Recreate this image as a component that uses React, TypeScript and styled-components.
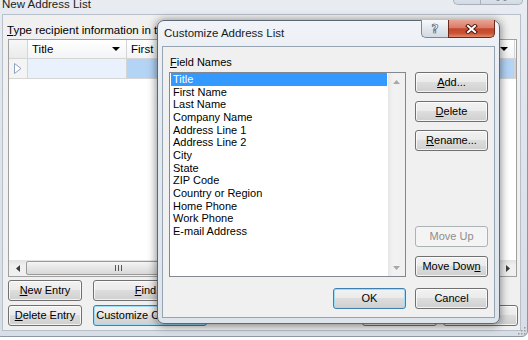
import styled, { createGlobalStyle } from "styled-components";

const font = `"Liberation Sans", Arial, sans-serif`;

const GlobalStyle = createGlobalStyle`
  html, body {
    margin: 0;
    padding: 0;
    background: #ffffff;
  }
  body {
    font-family: ${font};
    font-size: 11px;
    color: #000;
  }
`;

const Desktop = styled.div`
  position: relative;
  width: 528px;
  height: 340px;
  overflow: hidden;
  background: #ffffff;
`;

/* ---------- shared bits ---------- */

const Button = styled.button<{ $width: number; $default?: boolean }>`
  width: ${({ $width }) => $width}px;
  height: 21px;
  flex: none;
  box-sizing: border-box;
  padding: 0;
  border: 1px solid ${({ $default }) => ($default ? "#3c7fb1" : "#707070")};
  border-radius: 3px;
  background: linear-gradient(
    to bottom,
    #f2f2f2 0%,
    #ebebeb 45%,
    #dddddd 50%,
    #cfcfcf 100%
  );
  box-shadow: inset 0 0 0 1px
    ${({ $default }) => ($default ? "#9fdcf7" : "rgba(255,255,255,0.75)")};
  font-family: ${font};
  font-size: 11px;
  line-height: 19px;
  color: #000;
  text-align: center;
  white-space: nowrap;
  overflow: hidden;

  &:disabled {
    border-color: #adb2b5;
    background: #f4f4f4;
    box-shadow: none;
    color: #8d8d8d;
  }
`;

const CaptionGroup = styled.div`
  margin-left: auto;
  display: flex;
  align-self: flex-start;
`;

const HelpButton = styled.div<{ $width: number; $faded?: boolean }>`
  width: ${({ $width }) => $width}px;
  height: 18px;
  box-sizing: border-box;
  border: 1px solid ${({ $faded }) => ($faded ? "#a9b2bc" : "#7d8894")};
  border-top: none;
  border-right: none;
  border-radius: 0 0 0 5px;
  background: linear-gradient(to bottom, #f7f9fb, #e3e8ee 50%, #d3dae2);
  display: flex;
  align-items: center;
  justify-content: center;
  font-family: "DejaVu Sans", sans-serif;
  font-weight: bold;
  font-size: 12px;
  color: #ffffff;
  -webkit-text-stroke: 0.7px #505a66;
`;

const CloseButton = styled.div<{ $width: number; $faded?: boolean }>`
  width: ${({ $width }) => $width}px;
  height: 18px;
  box-sizing: border-box;
  border: 1px solid ${({ $faded }) => ($faded ? "#a9b2bc" : "#6c2a1e")};
  border-top: none;
  border-radius: 0 0 5px 0;
  background: ${({ $faded }) =>
    $faded
      ? "linear-gradient(to bottom, #f7f9fb, #e3e8ee 50%, #d3dae2)"
      : "linear-gradient(to bottom, #e8a493 0%, #dc7c66 45%, #c2462d 52%, #cc5234 78%, #e08a6c 100%)"};
  display: flex;
  align-items: center;
  justify-content: center;
`;

const CloseGlyph = ({ faded }: { faded?: boolean }) => (
  <svg width="13" height="10" viewBox="0 0 13 10">
    <path
      d="M3 2 L10 8 M10 2 L3 8"
      stroke={faded ? "#7d8792" : "#4a1a10"}
      strokeWidth="4"
      strokeLinecap="square"
    />
    <path
      d="M3 2 L10 8 M10 2 L3 8"
      stroke="#ffffff"
      strokeWidth="2"
      strokeLinecap="square"
    />
  </svg>
);

/* ---------- background window: New Address List ---------- */

const BackWindow = styled.div`
  position: absolute;
  left: -5px;
  top: -14px;
  width: 533px;
  height: 351px;
  box-sizing: border-box;
  border: 1px solid #8d97a3;
  border-radius: 6px;
  background: linear-gradient(to bottom, #e9edf2, #dfe5ec 40%, #d8dee5);
  display: flex;
  flex-direction: column;
`;

const BackTitleBar = styled.div`
  height: 28px;
  flex: none;
  display: flex;
  padding: 0 4px 0 6px;
`;

const BackTitle = styled.div`
  margin-top: 9px;
  line-height: 16px;
  font-size: 11.5px;
  color: #222;
`;

const BackClient = styled.div`
  flex: 1;
  margin: 0 7px 6px 7px;
  background: #f0f0f0;
  box-shadow: 0 0 0 1px #b7c0ca;
  padding: 7px 2px 4px 5px;
  display: flex;
  flex-direction: column;
`;

const Instruction = styled.div`
  width: 150px;
  line-height: 16px;
  font-size: 11.5px;
  margin-left: -1px;
  white-space: nowrap;
  overflow: hidden;
`;

const Grid = styled.div`
  width: 509px;
  height: 238px;
  margin-top: 1px;
  box-sizing: border-box;
  border: 1px solid #a0a0a0;
  background: #ffffff;
  display: flex;
  flex-direction: column;
  overflow: hidden;
`;

const GridRow = styled.div<{ $height: number }>`
  display: flex;
  flex: none;
  height: ${({ $height }) => $height}px;
`;

const HeaderCell = styled.div<{ $width: number }>`
  width: ${({ $width }) => $width}px;
  flex: none;
  box-sizing: border-box;
  border-right: 1px solid #d5d5d5;
  border-bottom: 1px solid #d5d5d5;
  background: linear-gradient(to bottom, #ffffff, #f3f4f6);
  display: flex;
  align-items: center;
  justify-content: space-between;
  padding: 0 6px 0 4px;
  font-size: 11.5px;
  white-space: nowrap;
  overflow: hidden;
`;

const CornerCell = styled(HeaderCell)`
  background: linear-gradient(to bottom, #f7f7f7, #ebebeb);
`;

const DataCell = styled.div<{ $width: number; $tone: "head" | "light" | "strong" }>`
  width: ${({ $width }) => $width}px;
  flex: none;
  box-sizing: border-box;
  border-right: 1px solid #d5d5d5;
  border-bottom: 1px solid #d5d5d5;
  background: ${({ $tone }) =>
    $tone === "head" ? "#f4f4f4" : $tone === "light" ? "#e8f1fc" : "#b4d4f6"};
  display: flex;
  align-items: center;
  justify-content: center;
`;

const GridBody = styled.div`
  flex: 1;
  background: #ffffff;
`;

const HScroll = styled.div`
  height: 16px;
  flex: none;
  display: flex;
  background: linear-gradient(to bottom, #e2e2e2, #f0f0f0 35%, #f0f0f0);
`;

const ScrollArrow = styled.div`
  width: 17px;
  flex: none;
  display: flex;
  align-items: center;
  justify-content: center;
`;

const HThumb = styled.div`
  width: 184px;
  margin: 1px 0;
  box-sizing: border-box;
  border: 1px solid #9a9a9a;
  border-radius: 2px;
  background: linear-gradient(to bottom, #f5f5f5, #e6e6e6 50%, #d8d8d8);
  display: flex;
  align-items: center;
  justify-content: center;
`;

const ScrollSpacer = styled.div`
  flex: 1;
`;

const ButtonRow = styled.div<{ $top: number }>`
  display: flex;
  gap: 11px;
  margin-top: ${({ $top }) => $top}px;
`;

const RightButtons = styled.div`
  margin-left: auto;
  display: flex;
  gap: 6px;
`;

const SizeGrip = styled.svg`
  position: absolute;
  right: 1px;
  bottom: 1px;
`;

const DropArrow = () => (
  <svg width="8" height="4" viewBox="0 0 8 4">
    <polygon points="0,0 8,0 4,4" fill="#000" />
  </svg>
);

const RowPointer = () => (
  <svg width="8" height="11" viewBox="0 0 8 11">
    <polygon
      points="0.5,0.5 7,5.5 0.5,10.5"
      fill="#ffffff"
      stroke="#8ca3bf"
      strokeWidth="1"
    />
  </svg>
);

const SmallArrow = ({ dir }: { dir: "left" | "right" | "up" | "down" }) => {
  const pts = {
    left: "4,0 4,7 0,3.5",
    right: "0,0 0,7 4,3.5",
    up: "0,4 7,4 3.5,0",
    down: "0,0 7,0 3.5,4",
  }[dir];
  const horiz = dir === "left" || dir === "right";
  return (
    <svg
      width={horiz ? 4 : 7}
      height={horiz ? 7 : 4}
      viewBox={horiz ? "0 0 4 7" : "0 0 7 4"}
    >
      <polygon points={pts} fill={horiz ? "#3c3c3c" : "#a8a8a8"} />
    </svg>
  );
};

const columns = [
  { label: "Title", width: 99 },
  { label: "First Name", width: 97 },
  { label: "Last Name", width: 97 },
  { label: "Company Name", width: 97 },
  { label: "Address Line 1", width: 97 },
  { label: "", width: 40 },
];

const NewAddressList = () => (
  <BackWindow>
    <BackTitleBar>
      <BackTitle>New Address List</BackTitle>
      <CaptionGroup>
        <HelpButton $width={27} $faded />
        <CloseButton $width={43} $faded>
          <CloseGlyph faded />
        </CloseButton>
      </CaptionGroup>
    </BackTitleBar>
    <BackClient>
      <Instruction>
        <u>T</u>ype recipient information in the table
      </Instruction>
      <Grid>
        <GridRow $height={19}>
          <CornerCell $width={19} />
          {columns.map((c, i) => (
            <HeaderCell key={i} $width={c.width}>
              <span>{c.label}</span>
              {c.label && <DropArrow />}
            </HeaderCell>
          ))}
        </GridRow>
        <GridRow $height={20}>
          <DataCell $width={19} $tone="head">
            <RowPointer />
          </DataCell>
          {columns.map((c, i) => (
            <DataCell key={i} $width={c.width} $tone={i === 0 ? "light" : "strong"} />
          ))}
        </GridRow>
        <GridBody />
        <HScroll>
          <ScrollArrow>
            <SmallArrow dir="left" />
          </ScrollArrow>
          <HThumb>
            <svg width="7" height="6" viewBox="0 0 7 6">
              <path d="M0.5 0 V6 M3.5 0 V6 M6.5 0 V6" stroke="#555" strokeWidth="1" />
            </svg>
          </HThumb>
          <ScrollSpacer />
          <ScrollArrow>
            <SmallArrow dir="right" />
          </ScrollArrow>
        </HScroll>
      </Grid>
      <ButtonRow $top={3}>
        <Button $width={74}>
          <u>N</u>ew Entry
        </Button>
        <Button $width={114}>
          <u>F</u>ind...
        </Button>
      </ButtonRow>
      <ButtonRow $top={4}>
        <Button $width={74}>
          <u>D</u>elete Entry
        </Button>
        <Button $width={114} $default>
          Customize Columns...
        </Button>
        <RightButtons>
          <Button $width={75}>OK</Button>
          <Button $width={75}>Cancel</Button>
        </RightButtons>
      </ButtonRow>
    </BackClient>
    <SizeGrip width="10" height="10" viewBox="0 0 10 10">
      {[
        [8, 2],
        [8, 5],
        [5, 5],
        [8, 8],
        [5, 8],
        [2, 8],
      ].map(([x, y], i) => (
        <rect key={i} x={x} y={y} width="1.5" height="1.5" fill="#9a9a9a" />
      ))}
    </SizeGrip>
  </BackWindow>
);

/* ---------- dialog: Customize Address List ---------- */

const Dialog = styled.div`
  position: absolute;
  left: 157px;
  top: 20px;
  width: 343px;
  height: 304px;
  box-sizing: border-box;
  border: 1px solid #5d6875;
  border-radius: 7px;
  background: linear-gradient(to bottom, #f0f3f7, #e4eaf1 30%, #dde4ec);
  box-shadow: 0 1px 9px 1px rgba(0, 0, 0, 0.45);
  display: flex;
  flex-direction: column;
`;

const DialogTitleBar = styled.div`
  height: 26px;
  flex: none;
  display: flex;
  padding: 0 4px 0 6px;

  ${CaptionGroup} {
    margin-top: -1px;
  }
`;

const DialogTitle = styled.div`
  margin-top: 4px;
  line-height: 16px;
  font-size: 11.5px;
  color: #1a1a1a;
`;

const DialogClient = styled.div`
  flex: 1;
  margin: 0 5px 6px 5px;
  background: #f0f0f0;
  box-shadow: 0 0 0 1px #96a3b1;
  padding: 7px 6px 8px 6px;
  display: flex;
  flex-direction: column;
`;

const MainRow = styled.div`
  display: flex;
  gap: 9px;
`;

const ListColumn = styled.div`
  width: 237px;
  display: flex;
  flex-direction: column;
`;

const FieldLabel = styled.div`
  line-height: 16px;
  font-size: 11px;
  margin: 0 0 2px 1px;
`;

const ListBox = styled.div`
  height: 205px;
  box-sizing: border-box;
  border: 1px solid #828790;
  background: #ffffff;
  display: flex;
`;

const ListItems = styled.div`
  flex: 1;
  padding: 0 1px;
`;

const ListItem = styled.div<{ $selected?: boolean }>`
  line-height: 12.65px;
  padding-left: 2px;
  font-size: 11px;
  white-space: nowrap;
  background: ${({ $selected }) => ($selected ? "#3399ff" : "transparent")};
  color: ${({ $selected }) => ($selected ? "#ffffff" : "#000000")};
`;

const VScroll = styled.div`
  width: 17px;
  flex: none;
  display: flex;
  flex-direction: column;
  justify-content: space-between;
  background: linear-gradient(to right, #e6e6e6, #f2f2f2 30%, #f0f0f0);
`;

const VArrow = styled.div`
  height: 17px;
  display: flex;
  align-items: center;
  justify-content: center;
`;

const SideButtons = styled.div`
  width: 73px;
  padding-top: 18px;
  display: flex;
  flex-direction: column;
  gap: 8px;
`;

const LowerButtons = styled.div`
  margin-top: auto;
  display: flex;
  flex-direction: column;
  gap: 9px;
`;

const FooterRow = styled.div`
  margin-top: 11px;
  display: flex;
  justify-content: flex-end;
  gap: 9px;
`;

const fieldNames = [
  "Title",
  "First Name",
  "Last Name",
  "Company Name",
  "Address Line 1",
  "Address Line 2",
  "City",
  "State",
  "ZIP Code",
  "Country or Region",
  "Home Phone",
  "Work Phone",
  "E-mail Address",
];

const CustomizeDialog = () => (
  <Dialog>
    <DialogTitleBar>
      <DialogTitle>Customize Address List</DialogTitle>
      <CaptionGroup>
        <HelpButton $width={27}>?</HelpButton>
        <CloseButton $width={47}>
          <CloseGlyph />
        </CloseButton>
      </CaptionGroup>
    </DialogTitleBar>
    <DialogClient>
      <MainRow>
        <ListColumn>
          <FieldLabel>
            <u>F</u>ield Names
          </FieldLabel>
          <ListBox>
            <ListItems>
              {fieldNames.map((name, i) => (
                <ListItem key={name} $selected={i === 0}>
                  {name}
                </ListItem>
              ))}
            </ListItems>
            <VScroll>
              <VArrow>
                <SmallArrow dir="up" />
              </VArrow>
              <VArrow>
                <SmallArrow dir="down" />
              </VArrow>
            </VScroll>
          </ListBox>
        </ListColumn>
        <SideButtons>
          <Button $width={73}>
            <u>A</u>dd...
          </Button>
          <Button $width={73}>
            <u>D</u>elete
          </Button>
          <Button $width={73}>
            <u>R</u>ename...
          </Button>
          <LowerButtons>
            <Button $width={73} disabled>
              Move Up
            </Button>
            <Button $width={73}>
              Move Dow<u>n</u>
            </Button>
          </LowerButtons>
        </SideButtons>
      </MainRow>
      <FooterRow>
        <Button $width={73} $default>
          OK
        </Button>
        <Button $width={73}>Cancel</Button>
      </FooterRow>
    </DialogClient>
  </Dialog>
);

export default function App() {
  return (
    <>
      <GlobalStyle />
      <Desktop>
        <NewAddressList />
        <CustomizeDialog />
      </Desktop>
    </>
  );
}
